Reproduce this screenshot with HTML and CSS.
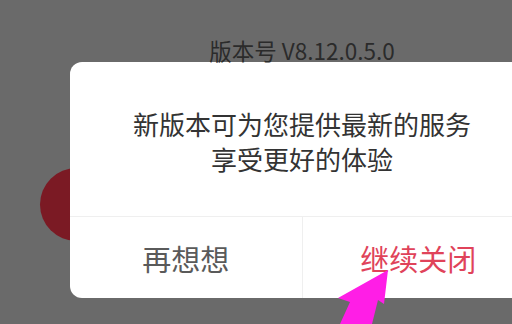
FILE: index.html
```html
<!DOCTYPE html>
<html lang="zh-CN">
<head>
    <meta charset="UTF-8">
    <meta name="viewport" content="width=device-width, initial-scale=1.0">
    <title>版本更新</title>
    <link rel="stylesheet" href="styles.css">
</head>
<body>
    <div class="screen">
        <div class="badge"></div>

        <div class="column">
            <div class="version">版本号 V8.12.0.5.0</div>

            <div class="dialog">
                <div class="message">
                    <p>新版本可为您提供最新的服务</p>
                    <p>享受更好的体验</p>
                </div>
                <div class="actions">
                    <div class="btn cancel">再想想</div>
                    <div class="btn confirm">继续关闭</div>
                </div>
            </div>
        </div>

        <svg class="pointer" width="80" height="60" viewBox="0 0 80 60">
            <polygon points="68,0 18,28 30,32 20,54 52,54 58,30 64,34" fill="#ff1ee6"/>
        </svg>
    </div>
</body>
</html>
```

FILE: styles.css
```css
body {
    margin: 0;
    padding: 0;
    background: #6a6a6a;
    font-family: "Noto Sans CJK SC", "Noto Sans", sans-serif;
}

.screen {
    position: relative;
    width: 512px;
    height: 324px;
    overflow: hidden;
}

.column {
    position: relative;
    width: 464px;
    margin-left: 70px;
    padding-top: 38px;
}

.version {
    text-align: center;
    font-size: 22.5px;
    line-height: 24px;
    color: #2b2b2b;
}

.dialog {
    background: #fff;
    border-radius: 12px;
    height: 236px;
    display: flex;
    flex-direction: column;
}

.message {
    height: 155px;
    display: flex;
    flex-direction: column;
    justify-content: center;
    align-items: center;
    padding-top: 4px;
    box-sizing: border-box;
    border-bottom: 1px solid #efefef;
    font-size: 26px;
    line-height: 35px;
    color: #333;
}

.message p {
    margin: 0;
}

.actions {
    flex: 1;
    display: flex;
}

.btn {
    flex: 1;
    display: flex;
    align-items: center;
    justify-content: center;
    font-size: 29px;
}

.cancel {
    color: #5a5a5a;
    border-right: 1px solid #efefef;
}

.confirm {
    color: #e0435a;
}

.badge {
    position: absolute;
    left: 40px;
    top: 168px;
    width: 73px;
    height: 73px;
    border-radius: 50%;
    background: #7b1a24;
}

.pointer {
    position: absolute;
    left: 320px;
    top: 270px;
}
```
